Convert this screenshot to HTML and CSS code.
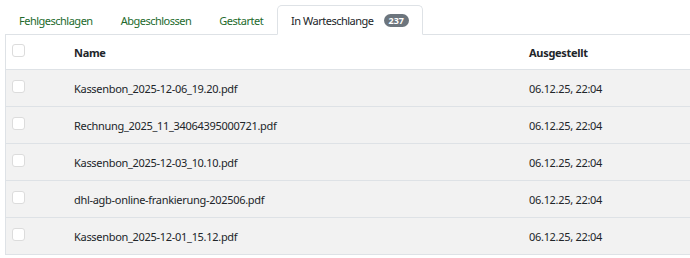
FILE: index.html
```html
<!DOCTYPE html>
<html lang="de">
<head>
    <meta charset="UTF-8">
    <meta name="viewport" content="width=device-width, initial-scale=1.0">
    <title>Dokumente</title>
    <link rel="stylesheet" href="styles.css">
</head>
<body>
    <div class="page">
        <ul class="tabs">
            <li class="tab">Fehlgeschlagen</li>
            <li class="tab">Abgeschlossen</li>
            <li class="tab">Gestartet</li>
            <li class="tab active">In Warteschlange <span class="badge">237</span></li>
        </ul>
        <table class="doc-table">
            <thead>
                <tr>
                    <th class="check-col"><span class="check"></span></th>
                    <th class="name-col">Name</th>
                    <th>Ausgestellt</th>
                </tr>
            </thead>
            <tbody>
                <tr>
                    <td class="check-col"><span class="check"></span></td>
                    <td class="name-col">Kassenbon_2025-12-06_19.20.pdf</td>
                    <td>06.12.25, 22:04</td>
                </tr>
                <tr>
                    <td class="check-col"><span class="check"></span></td>
                    <td class="name-col">Rechnung_2025_11_34064395000721.pdf</td>
                    <td>06.12.25, 22:04</td>
                </tr>
                <tr>
                    <td class="check-col"><span class="check"></span></td>
                    <td class="name-col">Kassenbon_2025-12-03_10.10.pdf</td>
                    <td>06.12.25, 22:04</td>
                </tr>
                <tr>
                    <td class="check-col"><span class="check"></span></td>
                    <td class="name-col">dhl-agb-online-frankierung-202506.pdf</td>
                    <td>06.12.25, 22:04</td>
                </tr>
                <tr>
                    <td class="check-col"><span class="check"></span></td>
                    <td class="name-col">Kassenbon_2025-12-01_15.12.pdf</td>
                    <td>06.12.25, 22:04</td>
                </tr>
            </tbody>
        </table>
    </div>
</body>
</html>
```

FILE: styles.css
```css
body {
    font-family: "Noto Sans", sans-serif;
    font-size: 11px;
    letter-spacing: -0.3px;
    color: #212529;
    margin: 0;
    padding: 5px 0 0 5px;
    background: white;
    overflow: hidden;
}
.page {
    width: 700px;
}
.tabs {
    display: flex;
    list-style: none;
    margin: 0;
    padding: 0;
    border-bottom: 1px solid #dee2e6;
}
.tab {
    display: flex;
    align-items: center;
    height: 28px;
    padding: 0 13px;
    margin-bottom: -1px;
    color: #236a2c;
    letter-spacing: -0.5px;
    border: 1px solid transparent;
    border-radius: 5px 5px 0 0;
}
.tab.active {
    color: #212529;
    background: white;
    border-color: #dee2e6 #dee2e6 white;
}
.badge {
    display: inline-block;
    margin-left: 10px;
    padding: 0 5px;
    height: 13px;
    line-height: 13px;
    border-radius: 7px;
    background: #6c757d;
    color: white;
    font-size: 9px;
    font-weight: bold;
    letter-spacing: 0;
}
.doc-table {
    width: 100%;
    border-collapse: collapse;
    border-left: 1px solid #dee2e6;
}
.doc-table th,
.doc-table td {
    text-align: left;
    padding: 0;
    border-bottom: 1px solid #dee2e6;
}
.doc-table th {
    height: 34px;
    font-weight: bold;
    background: white;
}
.doc-table td {
    height: 36px;
    background: #f2f2f2;
}
.check-col {
    width: 62px;
    padding-left: 6px !important;
}
.name-col {
    width: 455px;
}
.check {
    display: block;
    width: 11px;
    height: 11px;
    border: 1px solid #dcdcdc;
    border-radius: 3px;
    background: white;
    margin-top: -4px;
}
```
